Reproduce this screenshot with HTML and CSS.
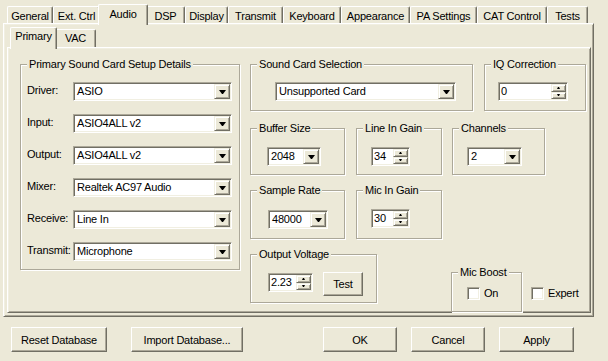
FILE: index.html
```html
<!DOCTYPE html>
<html lang="en">
<head>
<meta charset="UTF-8">
<meta name="viewport" content="width=device-width, initial-scale=1.0">
<title>Setup - Audio</title>
<link rel="stylesheet" href="styles.css">
</head>
<body>
<div class="dialog">

  <!-- Top level tabs -->
  <div class="tabs outer-tabs">
    <div class="tab">General</div>
    <div class="tab">Ext. Ctrl</div>
    <div class="tab active">Audio</div>
    <div class="tab">DSP</div>
    <div class="tab">Display</div>
    <div class="tab">Transmit</div>
    <div class="tab">Keyboard</div>
    <div class="tab">Appearance</div>
    <div class="tab">PA Settings</div>
    <div class="tab">CAT Control</div>
    <div class="tab">Tests</div>
  </div>

  <div class="panel outer-panel">
    <!-- Audio sub tabs -->
    <div class="tabs inner-tabs">
      <div class="tab active">Primary</div>
      <div class="tab">VAC</div>
    </div>

    <div class="panel inner-panel">

      <!-- Left group -->
      <div class="grp g-primary">
        <div class="grp-title">Primary Sound Card Setup Details</div>
        <div class="fields">
          <label>Driver:</label>
          <div class="combo"><span class="val">ASIO</span><span class="drop"></span></div>
          <label>Input:</label>
          <div class="combo"><span class="val">ASIO4ALL v2</span><span class="drop"></span></div>
          <label>Output:</label>
          <div class="combo"><span class="val">ASIO4ALL v2</span><span class="drop"></span></div>
          <label>Mixer:</label>
          <div class="combo"><span class="val">Realtek AC97 Audio</span><span class="drop"></span></div>
          <label>Receive:</label>
          <div class="combo"><span class="val">Line In</span><span class="drop"></span></div>
          <label>Transmit:</label>
          <div class="combo"><span class="val">Microphone</span><span class="drop"></span></div>
        </div>
      </div>

      <!-- Right side groups -->
      <div class="right">
        <div class="row row-first">
          <div class="grp g-card">
            <div class="grp-title">Sound Card Selection</div>
            <div class="grp-body">
              <div class="combo"><span class="val">Unsupported Card</span><span class="drop"></span></div>
            </div>
          </div>
          <div class="grp g-iq">
            <div class="grp-title">IQ Correction</div>
            <div class="grp-body">
              <div class="spin"><span class="val">0</span><span class="updown"><i class="up"></i><i class="down"></i></span></div>
            </div>
          </div>
        </div>

        <div class="row">
          <div class="grp g-buffer">
            <div class="grp-title">Buffer Size</div>
            <div class="grp-body">
              <div class="combo"><span class="val">2048</span><span class="drop"></span></div>
            </div>
          </div>
          <div class="grp g-gain">
            <div class="grp-title">Line In Gain</div>
            <div class="grp-body">
              <div class="spin"><span class="val">34</span><span class="updown"><i class="up"></i><i class="down"></i></span></div>
            </div>
          </div>
          <div class="grp g-channels">
            <div class="grp-title">Channels</div>
            <div class="grp-body">
              <div class="combo"><span class="val">2</span><span class="drop"></span></div>
            </div>
          </div>
        </div>

        <div class="row row-tall">
          <div class="grp g-rate">
            <div class="grp-title">Sample Rate</div>
            <div class="grp-body">
              <div class="combo"><span class="val">48000</span><span class="drop"></span></div>
            </div>
          </div>
          <div class="grp g-gain">
            <div class="grp-title">Mic In Gain</div>
            <div class="grp-body">
              <div class="spin"><span class="val">30</span><span class="updown"><i class="up"></i><i class="down"></i></span></div>
            </div>
          </div>
        </div>

        <div class="row row-tall row-last">
          <div class="grp g-voltage">
            <div class="grp-title">Output Voltage</div>
            <div class="grp-body">
              <div class="spin"><span class="val">2.23</span><span class="updown"><i class="up"></i><i class="down"></i></span></div>
              <button class="btn btn-test" type="button">Test</button>
            </div>
          </div>
          <div class="grp g-boost">
            <div class="grp-title">Mic Boost</div>
            <div class="grp-body">
              <div class="check"><span class="box"></span>On</div>
            </div>
          </div>
          <div class="check check-expert"><span class="box"></span>Expert</div>
        </div>
      </div>

    </div>
  </div>

  <!-- Bottom buttons -->
  <div class="actions">
    <button class="btn btn-reset" type="button">Reset Database</button>
    <button class="btn btn-import" type="button">Import Database...</button>
    <button class="btn btn-ok" type="button">OK</button>
    <button class="btn btn-cancel" type="button">Cancel</button>
    <button class="btn btn-apply" type="button">Apply</button>
  </div>

</div>
</body>
</html>
```

FILE: styles.css
```css
/* Classic Windows dialog look on XP colours */
* {
  box-sizing: border-box;
}

body {
  margin: 0;
  background-color: #ece9d8;
  font: 11px "Liberation Sans", Arial, sans-serif;
  letter-spacing: -0.2px;
  color: #000;
}

.dialog {
  width: 608px;
  height: 361px;
  padding: 4px 0 0 3px;
}

/* Tab strips */
.tabs {
  display: grid;
  align-items: end;
}

.outer-tabs {
  height: 19px;
  padding-left: 4px;
  grid-template-columns: 46px 47px 46px 39px 43px 55px 58px 69px 67px 70px 41px;
}

.inner-tabs {
  height: 23px;
  padding-left: 5px;
  grid-template-columns: 43px 41px;
}

.tab {
  height: 17px;
  padding-top: 3px;
  line-height: 13px;
  text-align: center;
  white-space: nowrap;
  border: 1px solid #fff;
  border-bottom: 0;
  border-right-color: #716f64;
  border-radius: 2px 2px 0 0;
  box-shadow: inset -1px 0 #aca899;
}

.inner-tabs .tab {
  height: 18px;
  padding-top: 2px;
}

.tab.active {
  height: 21px;
  margin: 0 -2px -2px;
  background-color: #ece9d8;
  position: relative;
  z-index: 1;
}

.inner-tabs .tab.active {
  height: 22px;
}

/* Tab pages */
.panel {
  border: 1px solid;
  border-color: #fff #716f64 #716f64 #fff;
  box-shadow: inset 1px 1px #f1efe2, inset -1px -1px #aca899;
}

.outer-panel {
  width: 591px;
  height: 294px;
  padding-left: 3px;
}

.inner-panel {
  width: 584px;
  height: 266px;
  display: flex;
  gap: 10px;
  padding: 16px 0 0 12px;
}

/* Group boxes */
.grp {
  border: 1px solid #aca899;
  box-shadow: 1px 1px #fff, inset 1px 1px #fff;
}

.grp-title {
  width: fit-content;
  margin: -7px 0 0 6px;
  padding: 0 2px;
  line-height: 13px;
  white-space: nowrap;
  background-color: #ece9d8;
}

.grp-body {
  display: flex;
  align-items: flex-start;
  margin-top: 11px;
}

.g-primary {
  width: 220px;
  height: 206px;
}

.fields {
  display: grid;
  grid-template-columns: 46px 159px;
  grid-auto-rows: 19px;
  row-gap: 13px;
  margin: 11px 0 0 6px;
}

.fields label {
  align-self: center;
  padding-bottom: 3px;
  white-space: nowrap;
}

.right {
  display: flex;
  flex-direction: column;
  width: 336px;
}

.row {
  display: flex;
  gap: 11px;
  height: 47px;
  margin-bottom: 15px;
}

.row-first {
  margin-bottom: 17px;
}

.row-tall {
  height: 49px;
}

.row-tall .grp-body {
  margin-top: 12px;
}

.row-last {
  gap: 0;
  margin-bottom: 0;
}

.g-card { width: 223px; }
.g-card .grp-body { padding-left: 24px; }
.g-card .combo { width: 181px; }

.g-iq { width: 102px; }
.g-iq .grp-body { padding-left: 13px; }
.g-iq .spin { width: 70px; }

.g-buffer { width: 95px; }
.g-buffer .grp-body { padding-left: 16px; margin-top: 12px; }
.g-buffer .combo { width: 54px; }

.g-gain { width: 86px; }
.g-gain .grp-body { padding-left: 14px; margin-top: 12px; }
.g-gain .spin { width: 39px; }

.g-channels { width: 93px; margin-left: -1px; }
.g-channels .grp-body { padding-left: 14px; margin-top: 12px; }
.g-channels .combo { width: 55px; }

.g-rate { width: 95px; }
.g-rate .grp-body { padding-left: 17px; margin-top: 13px; }
.g-rate .combo { width: 60px; }

.g-voltage { width: 127px; }
.g-voltage .grp-body { padding-left: 17px; margin-top: 11px; }
.g-voltage .spin { width: 45px; margin-top: 1px; }

.g-boost {
  width: 71px;
  height: 40px;
  margin: 18px 0 0 74px;
}

.g-boost .grp-body {
  padding-left: 15px;
  margin-top: 8px;
}

/* Sunken fields */
.combo,
.spin {
  display: flex;
  height: 19px;
  padding: 1px;
  background-color: #fff;
  border: 1px solid;
  border-color: #aca899 #fff #fff #aca899;
  box-shadow: inset 1px 1px #716f64, inset -1px -1px #f1efe2;
}

.combo .val,
.spin .val {
  flex: 1;
  padding-left: 2px;
  line-height: 15px;
  white-space: nowrap;
  overflow: hidden;
}

.spin .val {
  padding-left: 1px;
}

/* Raised pieces: drop button, spinner halves, push buttons */
.drop,
.updown i,
.btn {
  background-color: #ece9d8;
  border: 1px solid;
  border-color: #f1efe2 #716f64 #716f64 #f1efe2;
  box-shadow: inset 1px 1px #fff, inset -1px -1px #aca899;
}

.drop {
  width: 16px;
  display: flex;
  align-items: center;
  justify-content: center;
}

.drop::after {
  content: "";
  width: 1px;
  border-top: 4px solid #000;
  border-left: 3px solid transparent;
  border-right: 3px solid transparent;
  margin-top: 1px;
}

.updown {
  width: 15px;
  display: flex;
  flex-direction: column;
}

.updown i {
  flex: 1;
  display: flex;
  align-items: center;
  justify-content: center;
}

.updown .up::after,
.updown .down::after {
  content: "";
  width: 1px;
  border-left: 1px solid transparent;
  border-right: 1px solid transparent;
}

.updown .up::after {
  border-bottom: 2px solid #000;
}

.updown .down::after {
  border-top: 2px solid #000;
}

/* Check boxes */
.check {
  display: flex;
  align-items: center;
  gap: 4px;
  line-height: 13px;
}

.box {
  width: 13px;
  height: 13px;
  background-color: #fff;
  border: 1px solid;
  border-color: #aca899 #fff #fff #aca899;
  box-shadow: inset 1px 1px #716f64, inset -1px -1px #f1efe2;
}

.check-expert {
  margin: 33px 0 0 9px;
  align-self: flex-start;
}

/* Push buttons */
.btn {
  height: 24px;
  padding: 0;
  font: inherit;
  letter-spacing: inherit;
  color: #000;
  text-align: center;
}

.btn-test {
  width: 40px;
  margin-left: 10px;
  border-color: #fff #716f64 #716f64 #fff;
  box-shadow: inset -1px -1px #aca899;
}

.actions {
  display: flex;
  margin-top: 10px;
  padding-left: 8px;
}

.actions .btn {
  height: 25px;
  border-color: #fff #716f64 #716f64 #fff;
  box-shadow: inset -1px -1px #aca899;
}

.btn-reset { width: 96px; }
.btn-import { width: 112px; margin-left: 24px; }
.btn-ok { width: 74px; margin-left: 80px; }
.btn-cancel { width: 74px; margin-left: 14px; }
.btn-apply { width: 75px; margin-left: 14px; }
```
